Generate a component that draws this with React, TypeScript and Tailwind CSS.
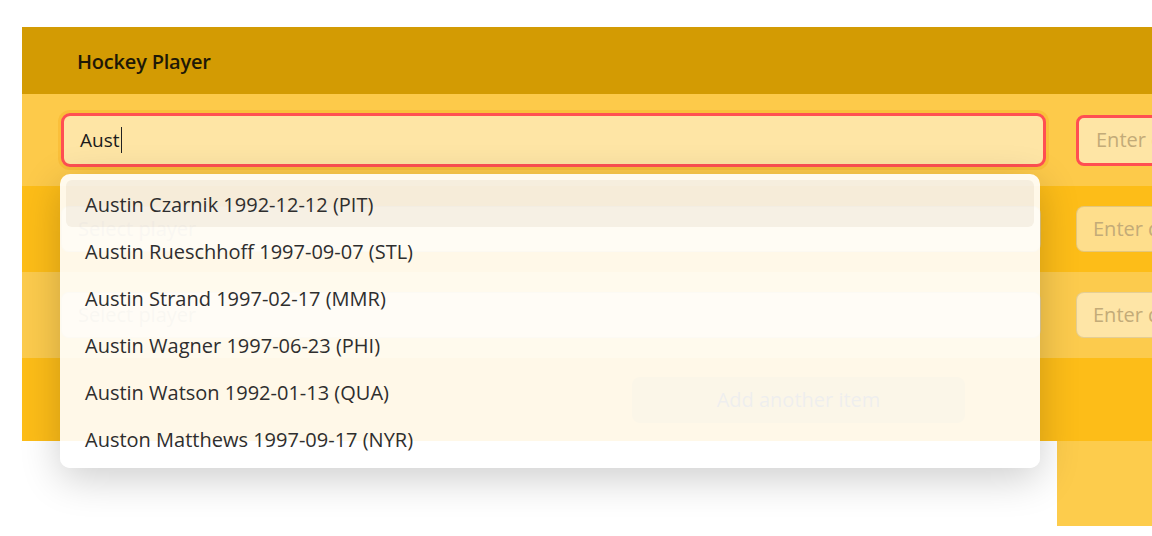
import React from 'react';

const players = [
  'Austin Czarnik 1992-12-12 (PIT)',
  'Austin Rueschhoff 1997-09-07 (STL)',
  'Austin Strand 1997-02-17 (MMR)',
  'Austin Wagner 1997-06-23 (PHI)',
  'Austin Watson 1992-01-13 (QUA)',
  'Auston Matthews 1997-09-17 (NYR)',
];

const App = () => {
  return (
    <div className="w-[1152px] h-[536px] overflow-hidden bg-white" style={{ fontFamily: '"Open Sans", "Noto Sans", sans-serif' }}>
      <div className="pl-[22px] pt-[27px]">
        <div className="relative w-[1200px]">
          {/* header */}
          <div className="h-[67px] bg-[#d39b03] flex items-center pl-[55px] pt-[2px]">
            <h1 className="text-[20px] font-semibold text-[#1e1806] tracking-[-0.2px]">Hockey Player</h1>
          </div>

          {/* row 1 - focused */}
          <div className="h-[92px] bg-[#fdca4a] flex items-center pl-[39px] gap-[30px]">
            <div className="w-[985px] h-[54px] rounded-[9px] border-[3px] border-[#ff4f52] bg-white/50 flex items-center pl-[16px] shadow-[0_0_0_3px_rgba(246,178,40,0.45)]">
              <span className="text-[19px] text-[#1b1b1b]">Aust</span>
              <span className="w-px h-[26px] bg-[#222] ml-px" />
            </div>
            <div className="flex-1 h-[51px] rounded-[8px] border-[3px] border-[#ff4f52] bg-white/50 flex items-center pl-[17px]">
              <span className="text-[20px] text-[#c3ab78]">Enter date</span>
            </div>
          </div>

          {/* row 2 */}
          <div className="h-[86px] bg-[#fdbd18] flex items-center pl-[39px] gap-[35px]">
            <div className="w-[980px] h-[46px] rounded-[8px] border border-black/10 bg-white/50 flex items-center pl-[16px]">
              <span className="text-[20px] text-[#c3ab78]">Select player</span>
            </div>
            <div className="flex-1 h-[46px] rounded-[8px] border border-black/10 bg-white/50 flex items-center pl-[16px]">
              <span className="text-[20px] text-[#c3ab78]">Enter date</span>
            </div>
          </div>

          {/* row 3 */}
          <div className="h-[86px] bg-[#fccb4d] flex items-center pl-[39px] gap-[35px]">
            <div className="w-[980px] h-[46px] rounded-[8px] border border-black/10 bg-white/50 flex items-center pl-[16px]">
              <span className="text-[20px] text-[#c3ab78]">Select player</span>
            </div>
            <div className="flex-1 h-[46px] rounded-[8px] border border-black/10 bg-white/50 flex items-center pl-[16px]">
              <span className="text-[20px] text-[#c3ab78]">Enter date</span>
            </div>
          </div>

          {/* row 4 */}
          <div className="h-[83px] bg-[#fdbd18] flex items-center pl-[610px]">
            <button className="w-[333px] h-[46px] rounded-[8px] bg-black/15 text-[20px] text-[#555]">
              Add another item
            </button>
          </div>

          <div className="ml-[1035px] h-[85px] bg-[#fdcc4c]" />

          {/* dropdown */}
          <div className="absolute left-[38px] top-[147px] w-[980px] p-[6px] rounded-[10px] bg-white/90 shadow-[0_10px_40px_rgba(0,0,0,0.2)]">
            {players.map((p, i) => (
              <div
                key={p}
                className={`h-[47px] flex items-center pl-[19px] pt-[2px] rounded-[6px] text-[20px] text-[#2e2e2e] ${i === 0 ? 'bg-[#7a5a20]/[0.07]' : ''}`}
              >
                {p}
              </div>
            ))}
          </div>
        </div>
      </div>
    </div>
  );
};

export default App;
